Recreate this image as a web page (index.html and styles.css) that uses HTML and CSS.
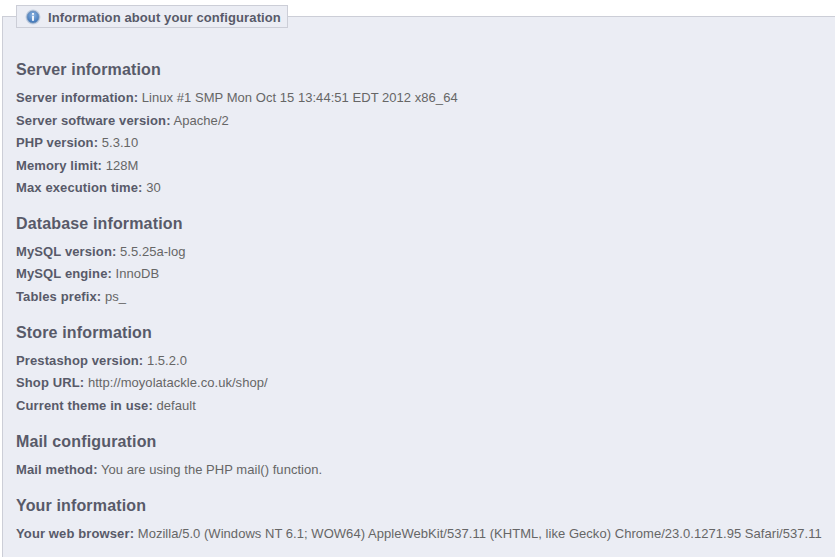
FILE: index.html
```html
<!DOCTYPE html>
<html lang="en">
<head>
<meta charset="utf-8">
<title>Configuration</title>
<link rel="stylesheet" href="styles.css">
</head>
<body>
<fieldset class="panel">
  <legend class="panel-legend">
    <svg class="info-icon" width="16" height="16" viewBox="0 0 16 16" aria-hidden="true">
      <defs><radialGradient id="g" cx="50%" cy="35%" r="65%"><stop offset="0" stop-color="#8fb6e2"/><stop offset="1" stop-color="#3a72b6"/></radialGradient></defs>
      <circle cx="8" cy="8" r="7.5" fill="#c3d0e2"/>
      <circle cx="8" cy="8" r="6" fill="url(#g)" stroke="#6f8fb8" stroke-width="0.8"/>
      <rect x="7.1" y="4" width="1.8" height="1.8" fill="#fff"/>
      <rect x="7.1" y="6.8" width="1.8" height="5" fill="#fff"/>
    </svg>
    Information about your configuration
  </legend>
  <h4 class="section-title first">Server information</h4>
  <p class="row"><b>Server information:</b> Linux #1 SMP Mon Oct 15 13:44:51 EDT 2012 x86_64</p>
  <p class="row"><b>Server software version:</b> Apache/2</p>
  <p class="row"><b>PHP version:</b> 5.3.10</p>
  <p class="row"><b>Memory limit:</b> 128M</p>
  <p class="row"><b>Max execution time:</b> 30</p>
  <h4 class="section-title">Database information</h4>
  <p class="row"><b>MySQL version:</b> 5.5.25a-log</p>
  <p class="row"><b>MySQL engine:</b> InnoDB</p>
  <p class="row"><b>Tables prefix:</b> ps_</p>
  <h4 class="section-title">Store information</h4>
  <p class="row"><b>Prestashop version:</b> 1.5.2.0</p>
  <p class="row"><b>Shop URL:</b> http://moyolatackle.co.uk/shop/</p>
  <p class="row"><b>Current theme in use:</b> default</p>
  <h4 class="section-title">Mail configuration</h4>
  <p class="row"><b>Mail method:</b> You are using the PHP mail() function.</p>
  <h4 class="section-title">Your information</h4>
  <p class="row"><b>Your web browser:</b> Mozilla/5.0 (Windows NT 6.1; WOW64) AppleWebKit/537.11 (KHTML, like Gecko) Chrome/23.0.1271.95 Safari/537.11</p>
</fieldset>
</body>
</html>
```
FILE: styles.css
```css
html, body {
  margin: 0;
  height: 100%;
  overflow: hidden;
  background: #fff;
}
body {
  padding: 5px 0 0 2px;
  box-sizing: border-box;
  font-family: "Liberation Sans", Arial, sans-serif;
  font-size: 13px;
  color: #585a69;
}
.panel {
  margin: 0 -20px 0 0;
  padding: 0 0 0 13px;
  min-width: 0;
  height: 551px;
  background: #ebedf4;
  border: 1px solid #ccced7;
  border-width: 1px 0 0 1px;
}
.panel-legend {
  display: flex;
  align-items: center;
  margin-left: 0;
  padding: 1px 6px 0 8px;
  height: 20px;
  box-sizing: content-box;
  background: #ebedf4;
  border: 1px solid #ccced7;
  font-size: 13px;
  letter-spacing: 0.11px;
  font-weight: bold;
  gap: 7px;
}
.info-icon {
  flex: none;
  margin-top: -1px;
}
.section-title {
  margin: 0;
  padding: 14.4px 0 7px;
  font-size: 16px;
  letter-spacing: 0.15px;
  line-height: 20px;
  font-weight: bold;
  color: #585a69;
}
.section-title.first {
  padding-top: 32px;
}
.row {
  margin: 0;
  line-height: 22.5px;
  letter-spacing: 0.04px;
  color: #666;
  white-space: nowrap;
}
.row b {
  letter-spacing: 0.12px;
  color: #585a69;
}
```
